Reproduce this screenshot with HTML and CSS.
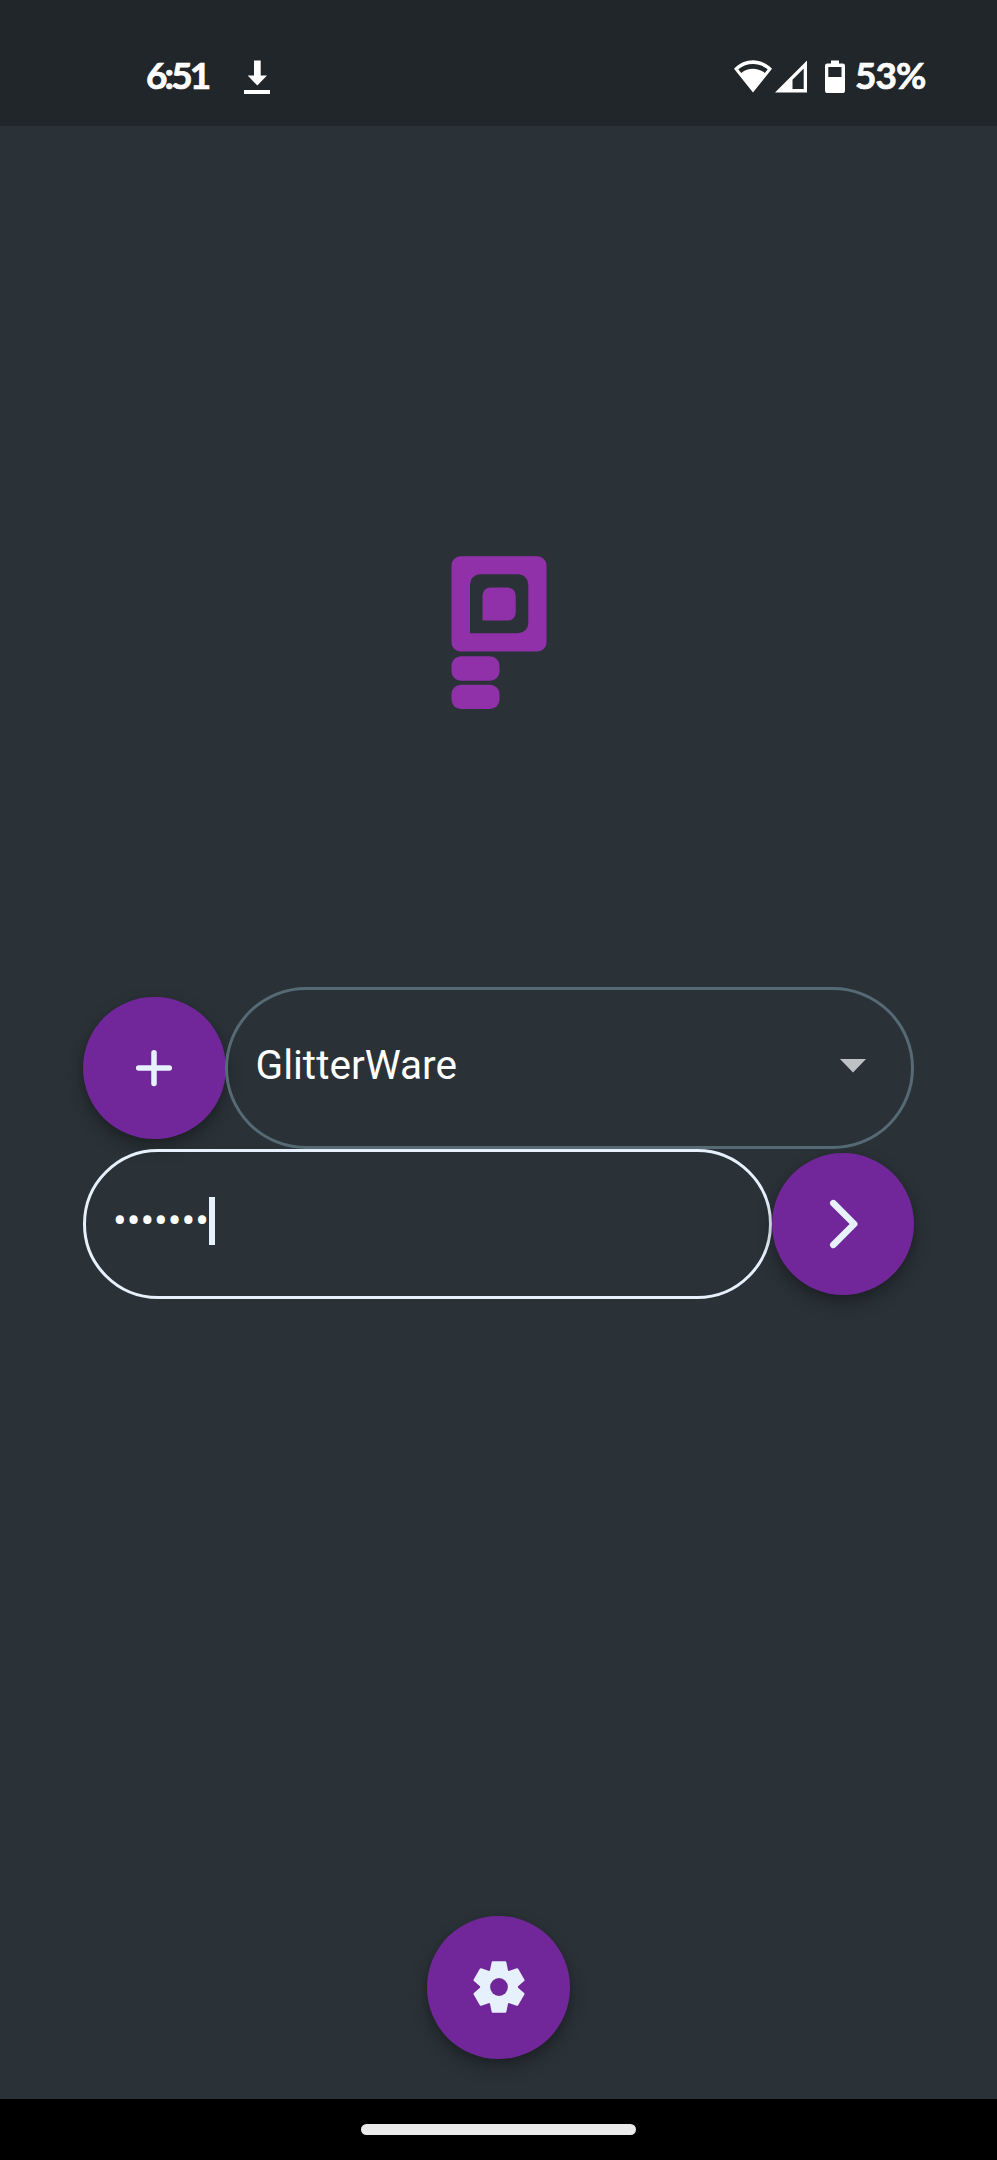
FILE: index.html
```html
<!DOCTYPE html>
<html lang="en">
<head>
<meta charset="utf-8">
<title>Sign in</title>
<link rel="stylesheet" href="styles.css">
</head>
<body>
<div class="screen">
  <header class="status">
    <span class="time">6:51</span>
    <svg class="download" width="26" height="34" viewBox="0 0 26 34"><path fill="#fff" d="M10 .5h6.700v15H23L13.300 25.500 3.700 15.500H10zM0 30h26v4H0z"/></svg>
    <span class="spacer"></span>
    <svg class="wifi" width="38" height="33" viewBox="0 0 38 33"><path fill="#fff" fill-rule="evenodd" d="M0 8.700C11-2.500 27-2.500 38 8.700L19 32.500zM4.300 9.300L7.200 12.900C14.500 7.300 23.500 7.300 30.800 12.900L33.700 9.300C25 2.300 13 2.300 4.300 9.300z"/></svg>
    <svg class="signal" width="33" height="33" viewBox="0 0 33 33"><path fill="#fff" fill-rule="evenodd" d="M0 32.500L32 .5v32zM17.500 19.800v9.200H28.700V8.500z"/></svg>
    <svg class="battery" width="20" height="33" viewBox="0 0 20 33"><path fill="#fff" fill-rule="evenodd" d="M6 .5h8v3h3.700a2.300 2.300 0 0 1 2.300 2.300v25a2.300 2.300 0 0 1-2.300 2.300H2.300A2.300 2.300 0 0 1 0 30.800v-25A2.300 2.300 0 0 1 2.300 3.500H6zM3.300 7v10h13.200V7z"/></svg>
    <span class="percent">53%</span>
  </header>

  <main class="content">
    <svg class="logo" width="96" height="153" viewBox="0 0 96 153">
      <g fill="#9031aa">
        <path fill-rule="evenodd" d="M9 .3H86.500a9 9 0 0 1 9 9V86.500a9 9 0 0 1-9 9H9.500a9 9 0 0 1-9-9V9.300a9 9 0 0 1 9-9zM19 77.300H67.300a10 10 0 0 0 10-10V28.300a10 10 0 0 0-10-10H29a10 10 0 0 0-10 10z"/>
        <path d="M31.500 64.500V39.500a8 8 0 0 1 8-8H56.700a8 8 0 0 1 8 8V56.500a8 8 0 0 1-8 8z"/>
        <rect x=".5" y="100.300" width="48" height="24.500" rx="9.500"/>
        <rect x=".5" y="128.800" width="48" height="24.200" rx="9.500"/>
      </g>
    </svg>

    <section class="form">
      <div class="row row-select">
        <button class="fab" aria-label="Add">
          <svg width="60" height="60" viewBox="0 0 60 60"><path d="M30 14.800v30.600M14.700 30.100h30.600" stroke="#e6f1fd" stroke-width="5.500" stroke-linecap="round"/></svg>
        </button>
        <div class="field select">
          <span class="value">GlitterWare</span>
          <svg class="caret" width="26" height="14" viewBox="0 0 26 14"><path fill="#bfc2c5" d="M0 0h26L13 13.500z"/></svg>
        </div>
      </div>
      <div class="row row-password">
        <div class="field password"><span class="dots">•••••••</span><span class="cursor"></span></div>
        <button class="fab" aria-label="Continue">
          <svg width="60" height="60" viewBox="0 0 60 60"><path d="M20.300 9.200L41.200 30 20.300 50.800" fill="none" stroke="#e6f1fd" stroke-width="6.600" stroke-linecap="round" stroke-linejoin="round"/></svg>
        </button>
      </div>
    </section>

    <button class="fab settings" aria-label="Settings">
      <svg width="60" height="60" viewBox="-30 -30 60 60">
        <defs><path id="tooth" d="M-8.300-14L-6.200-24.500H6.200L8.300-14z"/></defs>
        <g fill="#e6f1fd" stroke="#e6f1fd" stroke-width="2.400" stroke-linejoin="round">
          <use href="#tooth"/>
          <use href="#tooth" transform="rotate(60)"/>
          <use href="#tooth" transform="rotate(120)"/>
          <use href="#tooth" transform="rotate(180)"/>
          <use href="#tooth" transform="rotate(240)"/>
          <use href="#tooth" transform="rotate(300)"/>
          <circle r="17.600"/>
        </g>
        <circle r="8.900" fill="#712799"/>
      </svg>
    </button>
  </main>

  <footer class="navbar"><span class="handle"></span></footer>
</div>
</body>
</html>
```
FILE: styles.css
```css
* { box-sizing: border-box; }
body { margin: 0; background: #2a3237; }
svg { display: block; flex: none; }
.screen {
  width: 997px;
  height: 2160px;
  display: flex;
  flex-direction: column;
  background: #2a3237;
  color: #fff;
  font-family: Roboto, "Noto Sans", sans-serif;
}
.status {
  height: 126px;
  flex: none;
  display: flex;
  align-items: flex-start;
  padding: 60px 71px 0 146px;
  background: #21262a;
  font: 700 37px/40px Lato, sans-serif;
  -webkit-text-stroke: .7px #fff;
}
.time { width: 98px; letter-spacing: -2.900px; margin-top: -5px; }
.percent { width: 71px; margin-top: -5px; letter-spacing: -1px; white-space: nowrap; }
.spacer { flex: 1; }
.wifi { margin-right: 3px; }
.signal { margin-right: 17px; }
.battery { margin-right: 10px; }
.content {
  height: 1973px;
  flex: none;
  display: flex;
  flex-direction: column;
  align-items: center;
  padding-top: 430px;
}
.form { width: 831px; margin-top: 277px; }
.row { display: flex; align-items: center; }
.row-select { height: 163px; padding-top: 1px; }
.row-password { height: 150px; }
.fab {
  width: 142.500px;
  height: 142.500px;
  flex: none;
  display: flex;
  align-items: center;
  justify-content: center;
  padding: 0;
  border: 0;
  border-radius: 50%;
  background: #712799;
  box-shadow: 0 8px 18px rgba(0, 0, 0, .28), 0 3px 6px rgba(0, 0, 0, .12);
}
.field {
  flex: 1;
  height: 100%;
  display: flex;
  align-items: center;
  border: 3px solid #566a76;
  border-radius: 82px;
  font-size: 40.600px;
  line-height: 48px;
}
.select { justify-content: space-between; margin-left: -.600px; padding: 0 45px 6px 27.600px; }
.caret { margin-top: 2px; }
.password { border-color: #e6f1fd; padding: 0 27px 7px; }
.cursor { width: 6px; height: 48px; background: #e6f1fd; }
.settings { margin-top: 617px; }
.navbar {
  flex: 1;
  display: flex;
  justify-content: center;
  padding-top: 25px;
  background: #000;
}
.handle { width: 275px; height: 11px; border-radius: 6px; background: #ebebeb; }
```
